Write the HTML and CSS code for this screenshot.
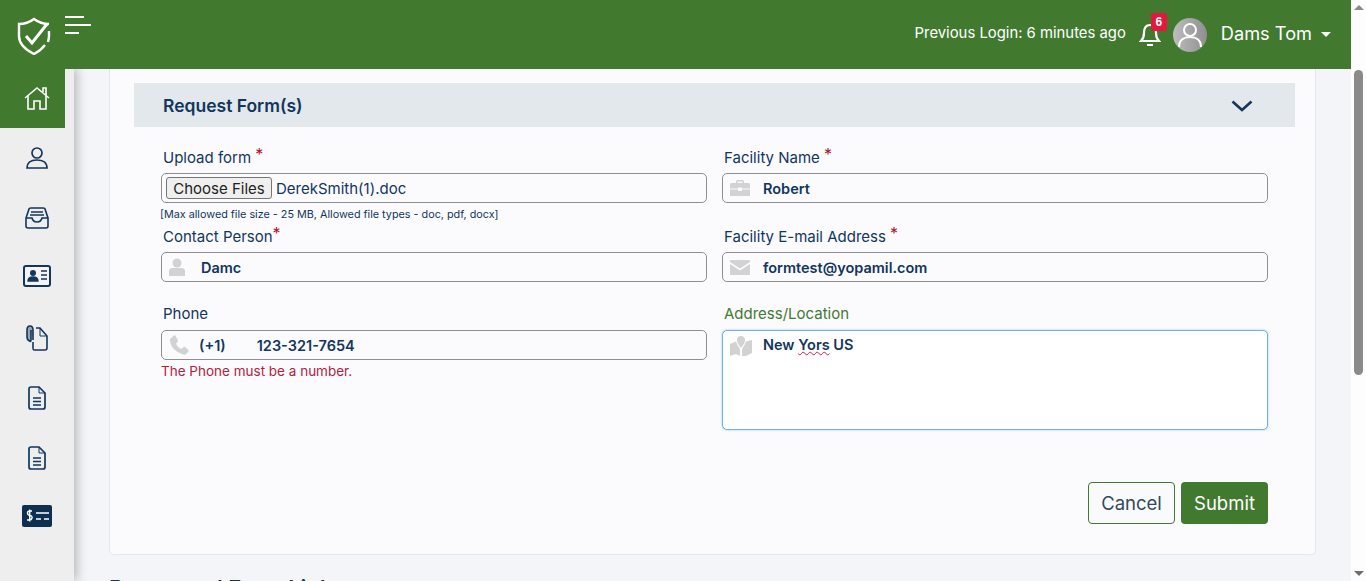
FILE: index.html
```html
<!DOCTYPE html>
<html lang="en">
<head>
<meta charset="utf-8">
<title>Request Form</title>
<link rel="stylesheet" href="styles.css">
</head>
<body>
<div class="page">
  <div class="viewport">
    <header class="topbar">
      <svg class="logo" viewBox="0 0 34 38" width="34" height="38" fill="none" stroke="#fff"><path d="M28 28 C25 32 21 35 17 37 C9 33 2 28 2 19 V7 C7 7 13 5 17 2 C21 5 27 7 32 7" stroke-width="2.4"/><path d="M32 14 V19 C32 21 31.500 23 31 25" stroke-width="2.400"/><path d="M9 19 L15 26 L30 7" stroke-width="3"/></svg>
      <div class="burger"><span class="b1"></span><span class="b2"></span><span class="b3"></span></div>
      <div class="spacer"></div>
      <span class="login">Previous Login: 6 minutes ago</span>
      <div class="bell">
        <svg viewBox="0 0 22 26" width="22" height="26" fill="none" stroke="#fff" stroke-width="2.200"><path d="M11 4 C6 4 5 8 5 12 C5 16 4 18 2 20 H20 C18 18 17 16 17 12 C17 8 16 4 11 4Z"/><path d="M8 24 H14" stroke-width="2"/></svg>
        <span class="badge">6</span>
      </div>
      <div class="avatar"><svg viewBox="0 0 34 34" width="34" height="34" fill="none" stroke="#fff" stroke-width="2"><circle cx="17" cy="12" r="6"/><path d="M6 29 C6 22 11 19 17 19 C23 19 28 22 28 29"/></svg></div>
      <span class="username">Dams Tom</span>
      <span class="caret"></span>
    </header>
    <div class="below">
      <nav class="sidebar">
        <a class="nav-item active"><svg viewBox="0 0 26 24" width="26" height="24" fill="none" stroke="#fff" stroke-width="1.6"><path d="M1 12 L13 2 L25 12"/><path d="M4 10 V23 H10 V15 H16 V23 H22 V10"/><path d="M19 6 V2 H22 V9"/></svg></a>
        <a class="nav-item"><svg viewBox="0 0 22 24" width="22" height="24" fill="none" stroke="#12365c" stroke-width="1.7"><circle cx="11" cy="7" r="5"/><path d="M1 22 C1 16 6 14 11 14 C16 14 21 16 21 22 Z"/></svg></a>
        <a class="nav-item"><svg viewBox="0 0 24 22" width="24" height="22" fill="none" stroke="#12365c" stroke-width="1.6"><path d="M1 11 L4 2 Q4 1 6 1 H18 Q20 1 20 2 L23 11 V19 Q23 21 21 21 H3 Q1 21 1 19Z"/><path d="M1 11 H7 Q8 15 12 15 Q16 15 17 11 H23"/><path d="M6 5 H18 M5 8 H19"/></svg></a>
        <a class="nav-item"><svg class="lift" viewBox="0 0 28 22" width="28" height="22"><rect x="1" y="1" width="26" height="20" rx="2" fill="#f4f4f6" stroke="#12365c" stroke-width="2"/><circle cx="10" cy="8" r="3" fill="#12365c"/><path d="M5 16 Q5 12 10 12 Q15 12 15 16Z M18 6 H24 M18 10 H24 M18 14 H24" fill="#12365c" stroke="#12365c" stroke-width="1.4"/></svg></a>
        <a class="nav-item"><svg viewBox="0 0 22 26" width="22" height="26" fill="none" stroke="#12365c" stroke-width="1.6"><path d="M10 3 H14 L21 11 V23 Q21 25 19 25 H8 Q7 25 7 23 V17"/><path d="M14 3 V11 H21" stroke-width="1"/><path d="M5 5 V15 Q5 17 3.500 16 Q1 15 1 12 V5 Q1 1 4 1 Q7 1 7 5 V15" fill="#9aa4b0"/></svg></a>
        <a class="nav-item"><svg viewBox="0 0 18 24" width="18" height="24" fill="none" stroke="#12365c" stroke-width="1.7"><path d="M3 1 H11 L17 7 V21 Q17 23 15 23 H3 Q1 23 1 21 V3 Q1 1 3 1Z"/><path d="M11 1 V7 H17" stroke-width="1"/><path d="M5 12 H13 M5 15.500 H13 M5 19 H13"/></svg></a>
        <a class="nav-item"><svg viewBox="0 0 18 24" width="18" height="24" fill="none" stroke="#12365c" stroke-width="1.7"><path d="M3 1 H11 L17 7 V21 Q17 23 15 23 H3 Q1 23 1 21 V3 Q1 1 3 1Z"/><path d="M11 1 V7 H17" stroke-width="1"/><path d="M5 12 H13 M5 15.500 H13 M5 19 H13"/></svg></a>
        <a class="nav-item"><svg class="lift" viewBox="0 0 30 22" width="30" height="22"><rect width="30" height="22" rx="2" fill="#0f2f52"/><path d="M11 6 H9 Q6.500 6 6.500 8 T9 10.500 T11 13 T8.500 15 H6 M8.700 4.500 V16.500" fill="none" stroke="#fff" stroke-width="1.400" transform="translate(-1 0)"/><path d="M14 8 H27 M14 14 H19 M22 14 H27" stroke="#fff" stroke-width="1.600"/></svg></a>
      </nav>
      <main class="main">
        <section class="card">
          <div class="card-head">
            <h2>Request Form(s)</h2>
            <svg viewBox="0 0 22 12" width="22" height="12" fill="none" stroke="#12365c" stroke-width="2.600"><path d="M1.500 1.500 L11 10 L20.500 1.500"/></svg>
          </div>
          <form class="form-grid">
            <div class="col">
              <div class="field f-upload">
                <label>Upload form <em>*</em></label>
                <div class="input file"><button type="button" class="choose">Choose Files</button><span>DerekSmith(1).doc</span></div>
                <small class="hint">[Max allowed file size - 25 MB, Allowed file types - doc, pdf, docx]</small>
              </div>
              <div class="field f-contact">
                <label>Contact Person<em>*</em></label>
                <div class="input"><svg class="ico" viewBox="0 0 16 18" width="16" height="18" fill="#d2d2d2"><circle cx="8" cy="5" r="4.500"/><path d="M0 18 V13 Q0 10 4 10 H12 Q16 10 16 13 V18Z"/></svg><b class="val">Damc</b></div>
              </div>
              <div class="field">
                <label>Phone</label>
                <div class="input"><svg class="ico" viewBox="0 0 20 20" width="20" height="20" fill="#d2d2d2"><path d="M1 4 L5 0.500 Q6 0 6.700 1 L9 5.500 Q9.300 6.500 8 7.500 L7 8.500 Q8 12 12.500 14 L14 12.500 Q15 11.500 16 12 L19.500 15 Q20 16 19 17 L16.500 19.500 Q15.500 20 13 19 Q2 15 1 6 Q0.500 5 1 4Z"/></svg><b class="val v-code">(+1)</b><b class="val v-phone">123-321-7654</b></div>
                <p class="error">The Phone must be a number.</p>
              </div>
            </div>
            <div class="col">
              <div class="field f-upload">
                <label>Facility Name <em>*</em></label>
                <div class="input"><svg class="ico wide" viewBox="0 0 20 16" width="20" height="16" fill="#d2d2d2"><path d="M6 3 V1.500 Q6 0 7.500 0 H12.500 Q14 0 14 1.500 V3 H12.500 V1.500 H7.500 V3Z M0 4.500 Q0 3 1.500 3 H18.500 Q20 3 20 4.500 V8.500 H12 V7.500 H8 V8.500 H0Z M0 9.500 H8 V11 H12 V9.500 H20 V16 H0Z"/></svg><b class="val">Robert</b></div>
              </div>
              <div class="field f-contact">
                <label>Facility E-mail Address <em>*</em></label>
                <div class="input"><svg class="ico wide" viewBox="0 0 20 15" width="20" height="15" fill="#d2d2d2"><path d="M0 1 Q0 0 1 0 H19 Q20 0 20 1 V2 L10 8.500 L0 2Z M0 4 L10 10.500 L20 4 V14 Q20 15 19 15 H1 Q0 15 0 14Z"/></svg><b class="val">formtest@yopamil.com</b></div>
              </div>
              <div class="field">
                <label class="focus-label">Address/Location</label>
                <div class="input textarea"><svg class="ico map" viewBox="0 0 22 20" width="22" height="20" fill="#d2d2d2"><path d="M11 0 Q15 0 15 4.500 Q15 7 11 12 Q7 7 7 4.500 Q7 0 11 0Z M0 8 L6 5.500 Q7 9 10 13 V20 L6 18 L0 20Z M12 13 Q15 9 16 5.500 L22 4 V17 L16 20 L12 20Z"/></svg><b class="val">New <span class="typo">Yors</span> US</b></div>
              </div>
            </div>
          </form>
          <div class="actions">
            <button type="button" class="btn btn-cancel">Cancel</button>
            <button type="button" class="btn btn-submit">Submit</button>
          </div>
        </section>
        <h3 class="next-title">Requested Form Link</h3>
      </main>
    </div>
  </div>
  <div class="scrollbar">
    <span class="arrow up"></span>
    <span class="thumb"></span>
    <span class="arrow down"></span>
  </div>
</div>
</body>
</html>
```
FILE: styles.css
```css
* { box-sizing: border-box; }
html, body { margin: 0; height: 100%; overflow: hidden; }
body { font-family: Inter, "Liberation Sans", sans-serif; color: #12365c; background: #f3f5f9; }
.page { display: flex; height: 581px; }
.viewport { flex: 1; min-width: 0; display: flex; flex-direction: column; }
.topbar { height: 69px; flex: none; background: #417a2f; display: flex; align-items: center; color: #fff; padding: 0 20px 0 17px; position: relative; z-index: 2; }
.logo { margin-top: 3px; }
.burger { display: flex; flex-direction: column; gap: 6px; margin: -20px 0 0 14px; align-items: flex-start; }
.burger span { height: 2px; background: #fff; display: block; }
.b1 { width: 19px; } .b2 { width: 26px; } .b3 { width: 14px; }
.spacer { flex: 1; }
.login { font-size: 14.850px; margin: -3px 13px 0 0; }
.bell { position: relative; width: 22px; height: 26px; margin-top: -2px; }
.badge { position: absolute; left: 12px; top: -8px; width: 16px; height: 18px; border-radius: 3px; background: #e5173f; font: bold 12px "Liberation Sans", sans-serif; text-align: center; line-height: 18px; color: #fff; }
.avatar { width: 34px; height: 34px; border-radius: 50%; background: linear-gradient(90deg, #bdbdbd, #8f8f8f); margin-left: 12px; }
.username { font-size: 18.200px; margin-left: 14px; margin-top: -4px; }
.caret { margin-left: 9px; width: 0; height: 0; border: 5px solid transparent; border-top-color: #fff; border-bottom: 0; }

.below { flex: 1; min-height: 0; display: flex; }
.sidebar { width: 74px; flex: none; background: #eee; margin-top: -1px; position: relative; z-index: 1; box-shadow: 3px 0 10px rgba(0,0,0,.25); display: flex; flex-direction: column; }
.nav-item { height: 60px; width: 65px; flex: none; display: flex; align-items: center; justify-content: center; padding-left: 8px; }
.nav-item.active { background: #417a2f; }
.lift { margin-top: -4px; }
.main { flex: 1; min-width: 0; padding: 0 35px; overflow: hidden; }
.card { background: #fbfbfe; border: 1px solid #e4e6ea; border-top: 0; border-radius: 0 0 5px 5px; height: 486px; padding: 14px 20px 0 24px; }
.card-head { height: 44px; background: #e3e8ec; display: flex; align-items: center; justify-content: space-between; padding: 2px 42px 0 29px; }
.card-head h2 { margin: -1px 0 0; font-size: 17.500px; font-weight: 600; color: #12365c; }
.form-grid { display: grid; grid-template-columns: 546px 546px; gap: 15px; padding: 19px 0 0 27px; }
.col { min-width: 0; }
.field label { display: block; font-size: 15px; line-height: 20px; padding: 1px 0 0 2px; height: 27px; }
.field em { color: #a8122c; font-style: normal; font-size: 16px; line-height: 14px; vertical-align: 3px; }
.input { height: 30px; border: 1px solid #8f8f8f; border-radius: 5px; background: #fbfbfe; display: flex; align-items: center; padding-left: 7px; }
.ico { flex: none; }
.val { font-size: 14.500px; font-weight: 600; margin-left: 16px; color: #12365c; }
.ico.wide + .val { margin-left: 13px; }
.ico.map + .val { margin-left: 11px; }
.val.v-code { margin-left: 10px; }
.val.v-phone { margin-left: 31px; }
.file span { font-size: 15px; margin-left: 4px; }
.choose { height: 22px; width: 106px; margin: 0 0 0 -3px; padding: 0; border: 1px solid #767676; border-radius: 3px; background: #efefef; color: #222; font: 15px Inter, sans-serif; }
.hint { display: block; font-size: 10.800px; height: 18px; line-height: 24px; color: #12365c; white-space: nowrap; margin-left: -1px; }
.f-upload { height: 79px; }
.f-contact { height: 78px; }
.error { margin: 2px 0 0; font-size: 13.500px; line-height: 18px; color: #b3223c; }
.field .focus-label { color: #417a2f; }
.textarea { height: 100px; background: #fff; align-items: flex-start; padding-top: 5px; border-color: #6fb2ee; box-shadow: 0 0 2px #7dbdf3; }
.typo { text-decoration: underline wavy #e5173f 1px; }
.actions { display: flex; justify-content: flex-end; gap: 6px; padding: 0 27px 0 0; margin-top: 52px; }
.btn { height: 42px; border-radius: 4px; font: 18.500px Inter, sans-serif; padding: 0; }
.btn-cancel { width: 87px; border: 1px solid #417a2f; background: #f9fafc; color: #33485e; }
.btn-submit { width: 87px; border: 0; background: #417a2f; color: #fff; }
.next-title { margin: 20px 0 0; font-size: 22px; font-weight: 600; color: #12365c; white-space: nowrap; }

.scrollbar { width: 15px; flex: none; background: #fdfdfd; display: flex; flex-direction: column; align-items: center; position: relative; z-index: 3; }
.arrow { width: 0; height: 0; border: 5px solid transparent; flex: none; }
.up { border-bottom: 5px solid #8a8a8a; border-top: 0; margin-top: 5px; }
.down { border-top: 5px solid #6e6e6e; border-bottom: 0; margin-bottom: 5px; }
.thumb { width: 9px; height: 305px; border-radius: 5px; background: #8a8a8a; margin-top: 60px; margin-bottom: auto; }
```
